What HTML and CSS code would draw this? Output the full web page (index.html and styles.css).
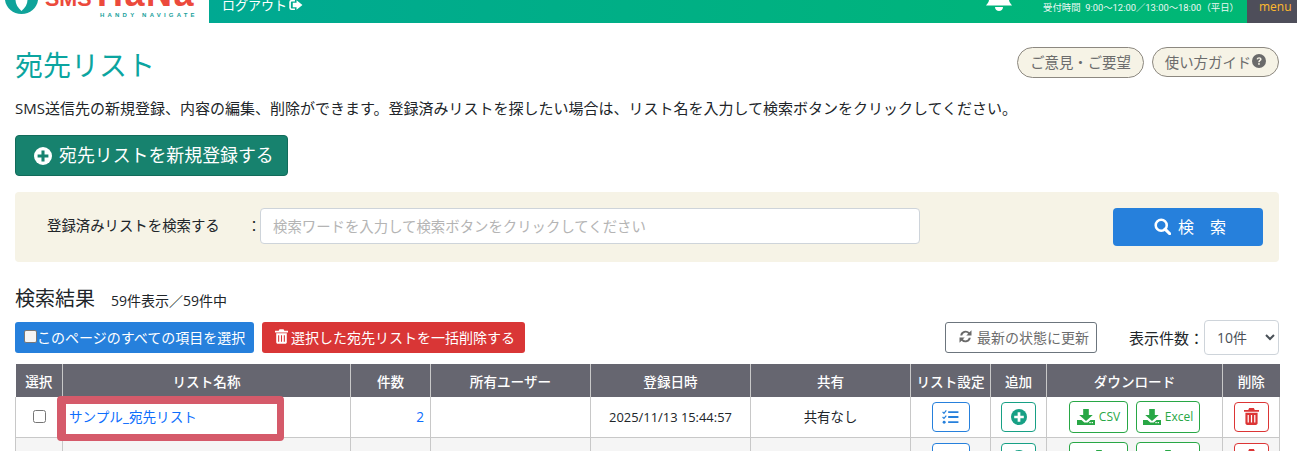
FILE: index.html
```html
<!DOCTYPE html>
<html lang="ja">
<head>
<meta charset="utf-8">
<title>宛先リスト</title>
<link rel="stylesheet" href="styles.css">
</head>
<body>
<header class="topbar">
  <div class="logo">
    <svg width="209" height="23" viewBox="0 0 209 23">
      <path d="M5 0C6 8 13 14 21.500 14S37 8 38 0Z" fill="#0fa39a"/>
      <path d="M21.500 11C18 8 15.500 4 15.500 0H27.500C27.500 4 25 8 21.500 11Z" fill="#fff"/>
      <text class="logo-sms" x="45" y="5.500">SMS</text>
      <text class="logo-hana" x="97" y="6">HaNa</text>
      <text class="logo-sub" x="100" y="16.500">HANDY NAVIGATE</text>
    </svg>
  </div>
  <div class="bar">
    <a class="logout">ログアウト
      <svg class="ico-logout" viewBox="0 0 26 20" width="14" height="12"><path d="M11 2H5C3 2 2 3 2 5V15C2 17 3 18 5 18H11" fill="none" stroke="#fff" stroke-width="3"/><path d="M14 1L25 10L14 19V14H7V6H14Z" fill="#fff"/></svg>
    </a>
    <svg class="bell" width="26" height="11" viewBox="0 0 26 11"><path d="M3 0H23C23 2 25 4 26 5.500H0C1 4 3 2 3 0Z" fill="#fff"/><path d="M9 7H17C17 9.500 15 11 13 11S9 9.500 9 7Z" fill="#fff"/></svg>
    <span class="hours">受付時間&nbsp; 9:00〜12:00／13:00〜18:00（平日）</span>
  </div>
  <div class="menu">menu</div>
</header>

<main class="page">
  <div class="title-row">
    <h1>宛先リスト</h1>
    <div class="title-links">
      <a class="pill pill-wide">ご意見・ご要望</a>
      <a class="pill">使い方ガイド<svg class="ico-help" viewBox="0 0 20 20" width="14" height="14"><circle cx="10" cy="10" r="10" fill="#6a6a6a"/><path d="M6.500 7.500C6.800 5.500 8.300 4.500 10.200 4.500C12.200 4.500 13.700 5.800 13.700 7.500C13.700 9.800 11 9.800 11 11.800H8.900C8.900 8.800 11.400 8.800 11.400 7.500C11.400 6.900 10.900 6.500 10.100 6.500C9.300 6.500 8.800 6.900 8.600 7.800Z" fill="#f6f3e6"/><rect x="8.800" y="13" width="2.300" height="2.400" fill="#f6f3e6"/></svg></a>
    </div>
  </div>
  <p class="lead">SMS送信先の新規登録、内容の編集、削除ができます。登録済みリストを探したい場合は、リスト名を入力して検索ボタンをクリックしてください。</p>

  <a class="btn-new"><svg viewBox="0 0 20 20" width="18" height="18"><circle cx="10" cy="10" r="10" fill="#fff"/><path d="M8.300 4H11.700V8.300H16V11.700H11.700V16H8.300V11.700H4V8.300H8.300Z" fill="#17826e"/></svg>宛先リストを新規登録する</a>

  <section class="search">
    <label class="search-label">登録済みリストを検索する</label>
    <span class="colon">：</span>
    <input class="search-input" type="text" placeholder="検索ワードを入力して検索ボタンをクリックしてください">
    <a class="btn-search"><svg viewBox="0 0 20 20" width="17" height="17"><circle cx="8.500" cy="8.500" r="6.500" fill="none" stroke="#fff" stroke-width="3"/><path d="M13 13L18.500 18.500" stroke="#fff" stroke-width="3.600" stroke-linecap="round"/></svg><span>検　索</span></a>
  </section>

  <div class="result-head">
    <h2>検索結果</h2><span class="count">59件表示／59件中</span>
  </div>

  <div class="toolbar">
    <a class="btn-tool blue"><span class="box"></span>このページのすべての項目を選択</a>
    <a class="btn-tool red"><svg viewBox="0 0 16 18" width="13" height="15"><path d="M5.500 0H10.500L11.500 2H16V4H0V2H4.500Z" fill="#fff"/><path d="M1.500 5H14.500V16C14.500 17 13.800 18 12.500 18H3.500C2.200 18 1.500 17 1.500 16Z" fill="#fff"/><path d="M4.500 7.500V15.500M8 7.500V15.500M11.500 7.500V15.500" stroke="#d93636" stroke-width="1.300"/></svg>選択した宛先リストを一括削除する</a>
    <a class="btn-refresh"><svg viewBox="0 0 20 20" width="15" height="15"><path d="M3 8.500A7.300 7.300 0 0 1 15.300 4.400L18 1.800V8.800H11L13.600 6.200A4.800 4.800 0 0 0 5.600 8.500ZM17 11.500A7.300 7.300 0 0 1 4.700 15.600L2 18.200V11.200H9L6.400 13.800A4.800 4.800 0 0 0 14.400 11.500Z" fill="#6a6a6a"/></svg>最新の状態に更新</a>
    <label class="per-label">表示件数：</label>
    <select class="per-select"><option>10件</option></select>
  </div>

  <table class="list">
    <colgroup>
      <col class="c-sel"><col class="c-name"><col class="c-num"><col class="c-owner"><col class="c-date"><col class="c-share"><col class="c-set"><col class="c-add"><col class="c-dl"><col class="c-del">
    </colgroup>
    <thead>
      <tr><th>選択</th><th>リスト名称</th><th>件数</th><th>所有ユーザー</th><th>登録日時</th><th>共有</th><th>リスト設定</th><th>追加</th><th>ダウンロード</th><th>削除</th></tr>
    </thead>
    <tbody>
      <tr>
        <td class="center"><input class="chk" type="checkbox"></td>
        <td class="name"><div class="highlight"></div><a>サンプル_宛先リスト</a></td>
        <td class="right"><a>2</a></td>
        <td></td>
        <td class="center date">2025/11/13 15:44:57</td>
        <td class="center raised">共有なし</td>
        <td class="center"><a class="act act-set"><svg viewBox="0 0 18 15" width="17" height="14"><path d="M0.500 2L2 3.500L4.500 0.500M0.500 7.500L2 9L4.500 6" fill="none" stroke="#2680dc" stroke-width="1.300"/><circle cx="2.200" cy="13" r="1.600" fill="#2680dc"/><path d="M6.500 1.300H17.500V3.300H6.500ZM6.500 6.500H17.500V8.500H6.500ZM6.500 12H17.500V14H6.500Z" fill="#2680dc"/></svg></a></td>
        <td class="center"><a class="act act-add"><svg viewBox="0 0 20 20" width="16" height="16"><circle cx="10" cy="10" r="10" fill="#17a085"/><path d="M8.300 4H11.700V8.300H16V11.700H11.700V16H8.300V11.700H4V8.300H8.300Z" fill="#fff"/></svg></a></td>
        <td class="center"><span class="dl-wrap"><a class="act act-dl act-csv"><svg viewBox="0 0 16 16" width="18" height="16" preserveAspectRatio="none"><path d="M5.500 0H10.500V6H14L8 12L2 6H5.500Z" fill="#28a745"/><path d="M0 11H4L6.500 13.500H9.500L12 11H16V16H0Z" fill="#28a745"/><rect x="11" y="13" width="1.200" height="1.200" fill="#fff"/><rect x="13" y="13" width="1.200" height="1.200" fill="#fff"/></svg>CSV</a><a class="act act-dl act-xls"><svg viewBox="0 0 16 16" width="18" height="16" preserveAspectRatio="none"><path d="M5.500 0H10.500V6H14L8 12L2 6H5.500Z" fill="#28a745"/><path d="M0 11H4L6.500 13.500H9.500L12 11H16V16H0Z" fill="#28a745"/><rect x="11" y="13" width="1.200" height="1.200" fill="#fff"/><rect x="13" y="13" width="1.200" height="1.200" fill="#fff"/></svg>Excel</a></span></td>
        <td class="center"><a class="act act-del"><svg viewBox="0 0 16 18" width="15" height="17"><path d="M5.500 0H10.500L11.500 2H16V4H0V2H4.500Z" fill="#dc3535"/><path d="M1.500 5H14.500V16C14.500 17 13.800 18 12.500 18H3.500C2.200 18 1.500 17 1.500 16Z" fill="#dc3535"/><path d="M4.500 7.500V15.500M8 7.500V15.500M11.500 7.500V15.500" stroke="#fff" stroke-width="1.300"/></svg></a></td>
      </tr>
      <tr class="alt">
        <td></td><td></td><td></td><td></td><td></td><td></td>
        <td class="center"><a class="act act-set"><svg viewBox="0 0 18 15" width="17" height="14"><path d="M0.500 2L2 3.500L4.500 0.500M0.500 7.500L2 9L4.500 6" fill="none" stroke="#2680dc" stroke-width="1.300"/><circle cx="2.200" cy="13" r="1.600" fill="#2680dc"/><path d="M6.500 1.300H17.500V3.300H6.500ZM6.500 6.500H17.500V8.500H6.500ZM6.500 12H17.500V14H6.500Z" fill="#2680dc"/></svg></a></td>
        <td class="center"><a class="act act-add"><svg viewBox="0 0 20 20" width="16" height="16"><circle cx="10" cy="10" r="10" fill="#17a085"/><path d="M8.300 4H11.700V8.300H16V11.700H11.700V16H8.300V11.700H4V8.300H8.300Z" fill="#fff"/></svg></a></td>
        <td class="center"><span class="dl-wrap"><a class="act act-dl act-csv"><svg viewBox="0 0 16 16" width="18" height="16" preserveAspectRatio="none"><path d="M5.500 0H10.500V6H14L8 12L2 6H5.500Z" fill="#28a745"/><path d="M0 11H4L6.500 13.500H9.500L12 11H16V16H0Z" fill="#28a745"/></svg></a><a class="act act-dl act-xls"><svg viewBox="0 0 16 16" width="18" height="16" preserveAspectRatio="none"><path d="M5.500 0H10.500V6H14L8 12L2 6H5.500Z" fill="#28a745"/><path d="M0 11H4L6.500 13.500H9.500L12 11H16V16H0Z" fill="#28a745"/></svg></a></span></td>
        <td class="center"><a class="act act-del"><svg viewBox="0 0 16 18" width="15" height="17"><path d="M5.500 0H10.500L11.500 2H16V4H0V2H4.500Z" fill="#dc3535"/><path d="M1.500 5H14.500V16C14.500 17 13.800 18 12.500 18H3.500C2.200 18 1.500 17 1.500 16Z" fill="#dc3535"/></svg></a></td>
      </tr>
    </tbody>
  </table>
</main>
</body>
</html>
```

FILE: styles.css
```css
* { box-sizing: border-box; }
html, body { margin: 0; padding: 0; height: 451px; overflow: hidden; }
body {
  font-family: "Open Sans", "Noto Sans CJK JP", sans-serif;
  color: #212529;
  background: #fff;
  font-size: 14px;
}
.topbar { display: flex; height: 23px; overflow: hidden; }
.logo { width: 209px; flex: none; background: #fff; }
.logo svg { display: block; }
.logo-sms { font: 700 21.500px "Liberation Sans", sans-serif; fill: #ec4a3c; }
.logo-hana { font: 700 36px "Liberation Sans", sans-serif; fill: #ec4a3c; letter-spacing: 1.500px; }
.logo-sub { font: 700 6px "Liberation Sans", sans-serif; fill: #17a09a; letter-spacing: 3.200px; }
.bar {
  flex: 1;
  display: flex;
  align-items: flex-start;
  background: linear-gradient(90deg, #00a992, #00b874);
  color: #fff;
  padding-left: 13px;
}
.logout { display: flex; align-items: center; gap: 2px; font-size: 13px; line-height: 10px; height: 10px; width: 764px; }
.ico-logout { flex: none; }
.bell { flex: none; margin-right: 31px; }
.hours { font-family: "Roboto", "Noto Sans CJK JP", sans-serif; font-size: 9.400px; line-height: 14px; margin-top: 1px; white-space: nowrap; opacity: .92; }
.menu { width: 50px; flex: none; background: #4e4e5a; color: #ffb92e; font: 12px/14px "Open Sans", sans-serif; padding-left: 12px; }

.page { padding: 0 18px 0 15px; }
.title-row { display: flex; justify-content: space-between; padding-top: 24px; height: 76px; }
h1 { margin: 0; font-size: 28px; font-weight: 400; line-height: 36px; color: #0ba5a0; }
.title-links { display: flex; gap: 8px; align-items: flex-start; }
.pill {
  display: flex; align-items: center; justify-content: center;
  width: 127px; height: 30px; padding-bottom: 2px;
  background: #f6f3e6;
  border: 1px solid #8c8880;
  border-radius: 16px;
  color: #6c6c6c;
  font-size: 14.400px;
}
.pill-wide { height: 31px; padding-bottom: 3px; }
.ico-help { margin-left: 1px; flex: none; }
.lead { margin: 0; font-size: 15px; line-height: 18px; height: 36px; white-space: nowrap; }

.btn-new {
  display: inline-flex; align-items: center; gap: 7px;
  width: 273px; height: 41px; padding: 0 0 3px 18px;
  background: #17826e; border: 1px solid #126b5a; border-radius: 4px;
  color: #fff; font-size: 17.900px;
}
.btn-new svg { margin-top: 3px; flex: none; }
.search {
  display: flex; align-items: flex-start;
  margin-top: 16px; height: 70px; width: 1264px;
  background: #f6f3e6; border-radius: 4px;
  padding: 16px 16px 0 32px;
}
.search-label { width: 200px; font-size: 14.400px; line-height: 36px; }
.colon { width: 13px; font-size: 14px; line-height: 36px; }
.search-input {
  width: 660px; height: 36px; margin-right: 193px;
  border: 1px solid #ced4da; border-radius: 4px;
  padding: 0 12px; font: 14.400px "Open Sans", "Noto Sans CJK JP", sans-serif;
  background: #fff;
}
.search-input::placeholder { color: #b4b4b4; opacity: 1; }
.btn-search {
  display: flex; align-items: center; justify-content: center; gap: 7px;
  width: 150px; height: 38px; flex: none; padding: 0 0 2px 4px;
  background: #2680dc; border-radius: 4px; color: #fff; font-size: 16px;
}
.result-head { display: flex; align-items: baseline; gap: 16px; margin-top: 24px; height: 28px; }
h2 { margin: 0; font-size: 20px; font-weight: 400; line-height: 26px; }
.count { font-size: 14px; }
.toolbar { display: flex; align-items: center; height: 35px; margin-top: 6px; width: 1264px; }
.btn-tool {
  display: flex; align-items: center; height: 31px; padding-bottom: 2px; color: #fff; font-size: 14px; border-radius: 3px; white-space: nowrap;
}
.blue { width: 239px; background: #2680dc; padding-left: 9px; margin-right: 8px; }
.box { width: 13px; height: 13px; background: #f4f4f4; border: 1px solid #777; border-radius: 2px; flex: none; }
.red { width: 263px; background: #d93636; padding-left: 13px; gap: 3px; margin-right: 420px; }
.btn-refresh {
  display: flex; align-items: center; gap: 4px; padding: 0 0 2px 12px;
  width: 152px; height: 31px; border: 1px solid #6c757d; border-radius: 3px; color: #6c6c6c; font-size: 14px; background: #fff;
  margin-right: 32px;
}
.per-label { width: 75px; font-size: 15px; white-space: nowrap; }
.per-select {
  width: 75px; height: 35px; border: 1px solid #ced4da; border-radius: 4px; background: #fff;
  font: 14px "Open Sans", "Noto Sans CJK JP", sans-serif; color: #495057; padding-left: 8px;
}

.list { border-collapse: collapse; table-layout: fixed; width: 1264px; margin-top: 9px; font-size: 13.600px; }
.c-sel { width: 47px; } .c-name { width: 288px; } .c-num { width: 80px; } .c-owner { width: 160px; }
.c-date { width: 160px; } .c-share { width: 160px; } .c-set { width: 80px; } .c-add { width: 56px; }
.c-dl { width: 176px; } .c-del { width: 57px; }
th {
  height: 33px; padding: 0; background: #666670; color: #fff; font-weight: 500; font-size: 13.600px;
  border: 1px solid #c8c8c8; border-top: 0; border-bottom: 0;
  white-space: nowrap;
}
th:first-child { border-left: 0; } th:last-child { border-right: 0; }
td { height: 40px; padding: 0; border: 1px solid #c8c8c8; vertical-align: middle; }
tbody tr:first-child td { border-top: 0; }
.alt td { background: #f5f5f5; vertical-align: top; padding-top: 5px; }
.alt .dl-wrap { margin-top: -1px; }
.center { text-align: center; }
.date { font-size: 12.900px; }
.raised { padding-bottom: 1px; font-size: 13.400px; }
.right { text-align: right; padding-right: 6px; padding-bottom: 1px; }
td a { color: #0d6efd; }
.chk { width: 13px; height: 13px; display: block; margin: 0 auto; }
.name { position: relative; padding: 0 0 2px 6px; }
.name a { position: relative; }
.highlight {
  position: absolute; left: -6px; top: -1px; width: 227px; height: 45px;
  border: solid #d55a6a; border-width: 8px 7px 7px 9px; border-radius: 4px; background: #fff;
}
.act {
  display: inline-flex; align-items: center; justify-content: center; gap: 4px;
  vertical-align: middle; height: 30px; background: #fff; border-radius: 4px; border: 1px solid; font-size: 12px;
}
.act-set { width: 38px; border-color: #2680dc; }
.act-add { width: 35px; border-color: #17a085; }
.act-del { width: 35px; border-color: #dc3535; }
.dl-wrap { display: inline-flex; gap: 8px; vertical-align: middle; }
.act-dl { height: 32px; border-color: #28a745; color: #28a745; }
.act-csv { width: 59px; }
.act-xls { width: 64px; }
```
